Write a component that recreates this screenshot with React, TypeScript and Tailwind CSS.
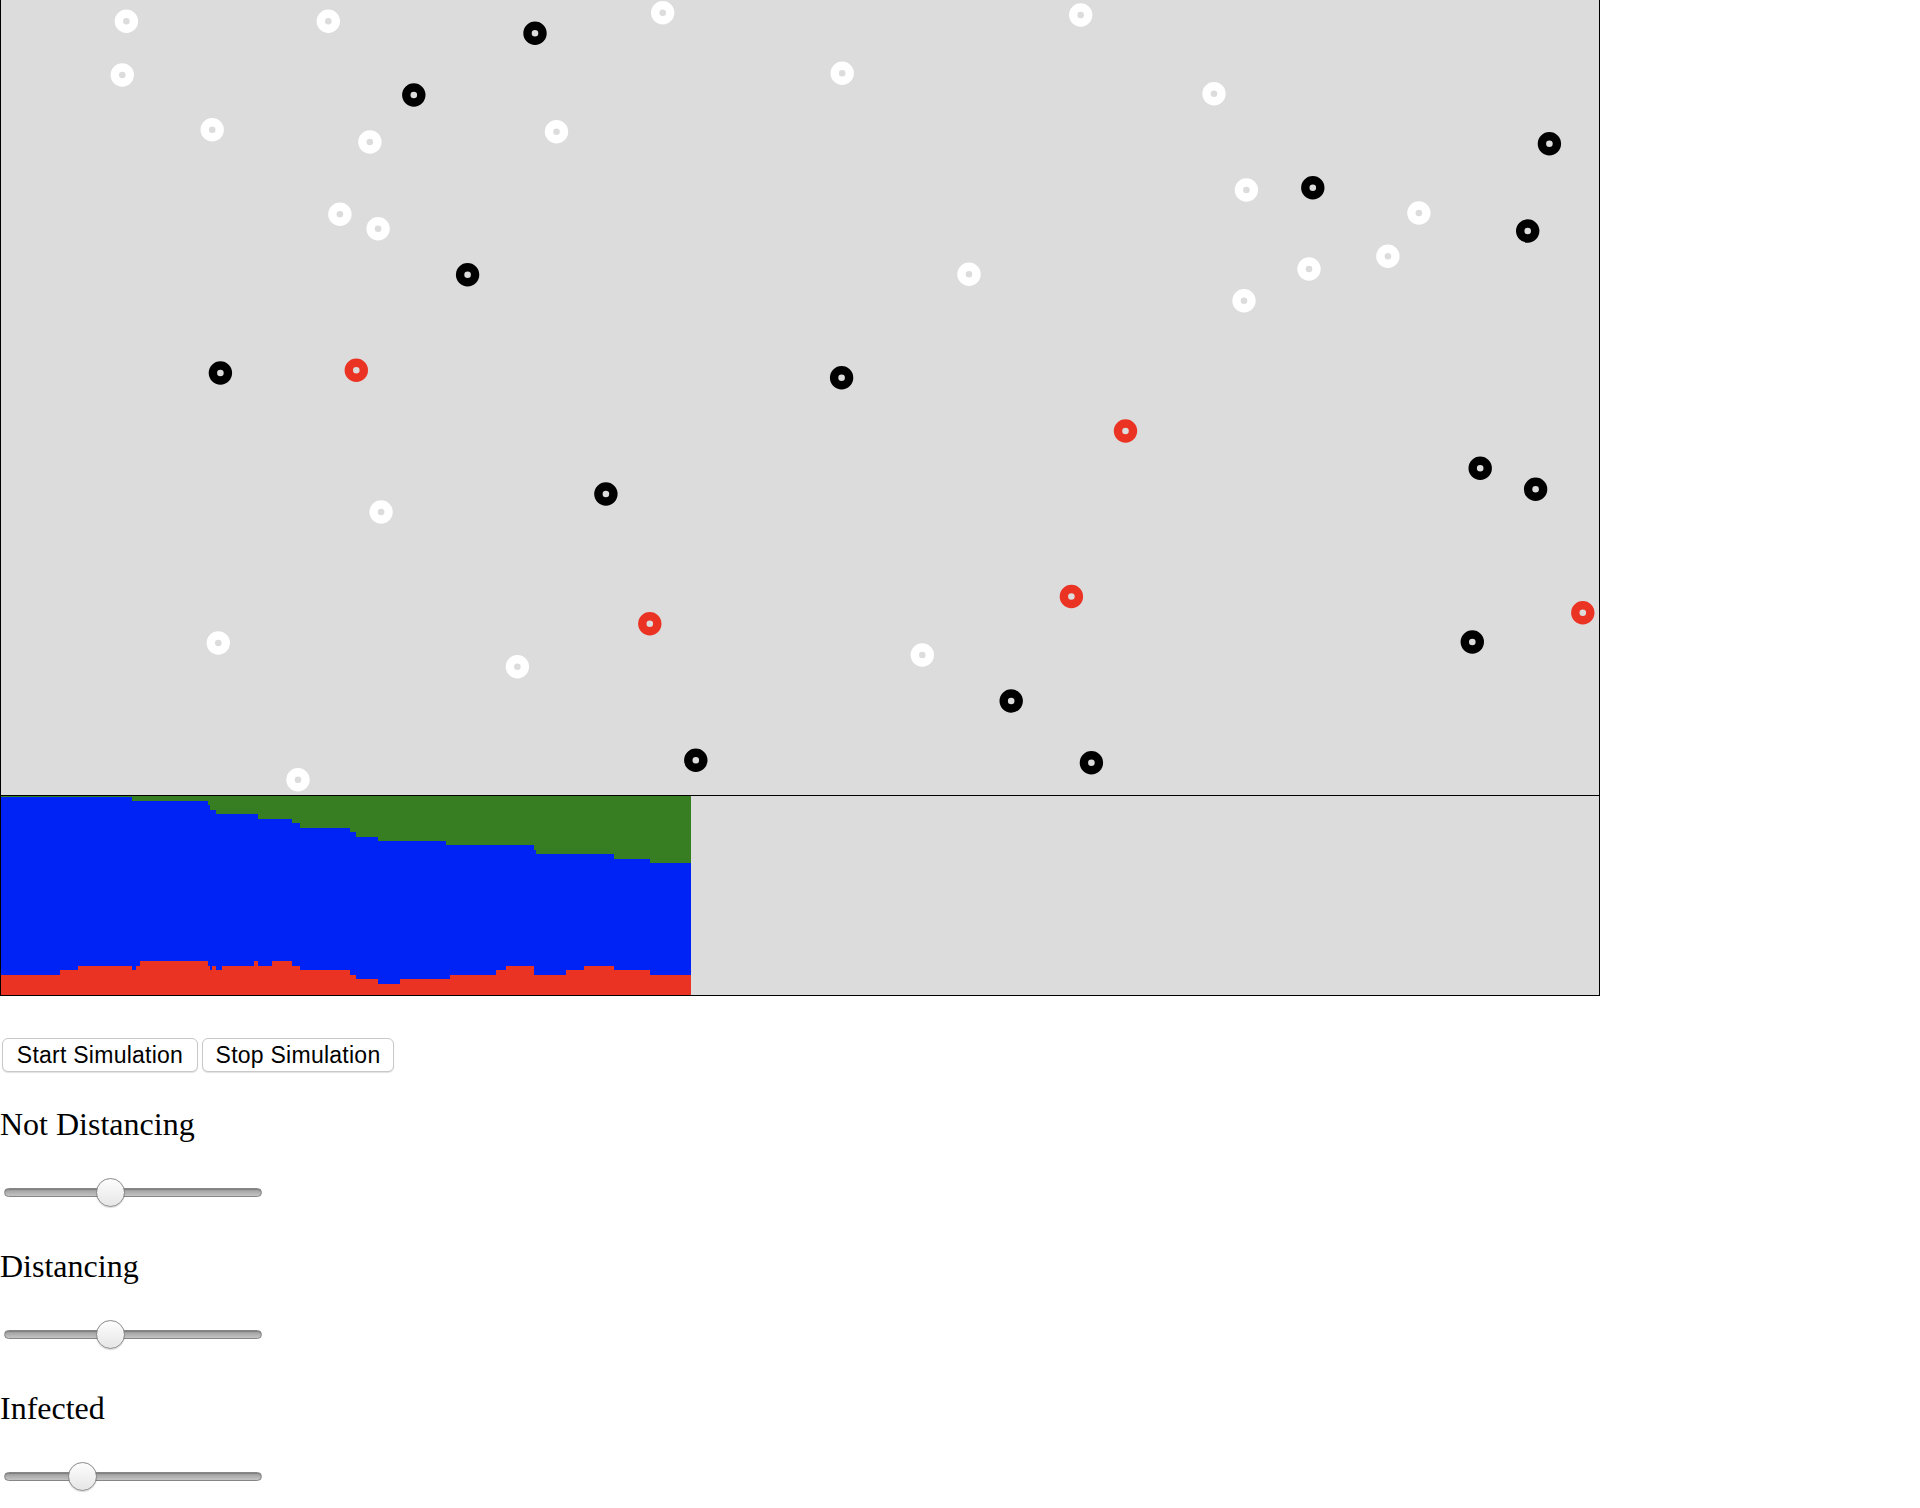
import React from "react";

// people on the board: [x, y] in page pixels
const healthy: [number, number][] = [
  [126.4, 21.3], [328.3, 21.3], [122.3, 75], [212.2, 129.7], [369.9, 142], [339.9, 214.3],
  [378.1, 228.7], [662.7, 12.7], [842.2, 73.3], [556.5, 131.7], [969, 274.3], [1080.7, 15],
  [1214, 93.7], [1246.4, 190], [1418.9, 213], [1387.9, 256.3], [1309, 269], [1244, 300.7],
  [381.1, 512], [218.3, 643], [517.4, 666.7], [298, 779.7], [922.3, 655],
];

const recovered: [number, number][] = [
  [535, 33.3], [413.8, 95], [467.6, 274.7], [220.4, 373], [841.6, 377.7], [1549.4, 143.7],
  [1312.8, 187.7], [1527.7, 231], [605.9, 494], [1011.2, 701], [695.8, 760.3], [1480.2, 468.3],
  [1535.6, 489.3], [1472.3, 642], [1091.4, 762.7],
];

const infected: [number, number][] = [
  [356.3, 370.3], [649.8, 623.7], [1125.5, 431], [1071.4, 596.5], [1582.8, 612.7],
];

// history chart steps: [x start, y of the band edge] in page pixels
const greenEdge: [number, number][] = [
  [0, 797], [131, 801], [207, 805], [209, 810], [215, 814], [257, 819], [291, 823], [299, 828],
  [349, 832], [355, 837], [377, 841], [445, 845], [533, 850], [535, 854], [613, 859], [649, 863],
];

const redEdge: [number, number][] = [
  [0, 975], [59, 970], [77, 966], [131, 970], [135, 966], [139, 961], [207, 966], [209, 970],
  [211, 966], [215, 970], [221, 966], [253, 961], [257, 966], [271, 961], [291, 966], [299, 970],
  [349, 975], [355, 979], [377, 984], [399, 979], [449, 975], [495, 970], [505, 966], [533, 975],
  [565, 970], [583, 966], [613, 970], [649, 975],
];

const CHART_END = 690;
const CHART_TOP = 796;
const CHART_H = 199;

function stepArea(steps: [number, number][]) {
  let d = `M0 ${CHART_H}`;
  steps.forEach(([x, y], i) => {
    const next = i < steps.length - 1 ? steps[i + 1][0] : CHART_END;
    d += ` L${x} ${y - CHART_TOP} L${next} ${y - CHART_TOP}`;
  });
  d += ` L${CHART_END} ${CHART_H} Z`;
  return d;
}

function Dot({ x, y, color }: { x: number; y: number; color: string }) {
  return <circle cx={x - 1} cy={y} r={7.5} fill="none" stroke={color} strokeWidth={8.4} />;
}

function Slider({ value, className }: { value: number; className?: string }) {
  return (
    <div className={`relative ml-[4px] h-[29px] w-[258px] ${className ?? ""}`}>
      <div className="absolute left-0 right-0 top-[10px] h-[9px] rounded-full border border-[#868686] bg-gradient-to-b from-[#9c9c9c] to-[#c4c4c4] shadow-[inset_0_1px_1px_rgba(0,0,0,0.2)]" />
      <div
        className="absolute top-0 h-[29px] w-[29px] rounded-full border-[1.5px] border-[#8a8a8a] bg-gradient-to-b from-[#fdfdfd] to-[#e6e6e6] shadow-[0_1px_1px_rgba(0,0,0,0.15)]"
        style={{ left: `${value * (258 - 29)}px` }}
      />
    </div>
  );
}

export default function App() {
  return (
    <div className="min-h-screen bg-white text-black">
      {/* BOARD */}
      <div className="h-[796px] w-[1600px] border-x border-b border-black bg-[#dcdcdc]">
        <svg width="1598" height="795" className="block">
          {healthy.map(([x, y], i) => (
            <Dot key={`h${i}`} x={x} y={y} color="#ffffff" />
          ))}
          {recovered.map(([x, y], i) => (
            <Dot key={`r${i}`} x={x} y={y} color="#000000" />
          ))}
          {infected.map(([x, y], i) => (
            <Dot key={`i${i}`} x={x} y={y} color="#ea3323" />
          ))}
        </svg>
      </div>

      {/* HISTORY */}
      <div className="h-[200px] w-[1600px] border-x border-b border-black bg-[#dcdcdc]">
        <svg width="1598" height="199" className="block">
          <rect x="0" y="0" width={CHART_END} height={CHART_H} fill="#377e22" />
          <path d={stepArea(greenEdge)} fill="#0023f5" />
          <path d={stepArea(redEdge)} fill="#ea3323" />
        </svg>
      </div>

      {/* CONTROLS */}
      <div className="mt-[42px] ml-[2px] flex gap-[4px] font-['Liberation_Sans',Arial,sans-serif] text-[23px] tracking-[0.25px]">
        <button className="h-[34px] w-[196px] rounded-[6px] border border-[#c8c8c8] bg-white leading-none shadow-[0_1px_1px_rgba(0,0,0,0.12)]">
          Start Simulation
        </button>
        <button className="h-[34px] w-[192px] rounded-[6px] border border-[#c8c8c8] bg-white leading-none shadow-[0_1px_1px_rgba(0,0,0,0.12)]">
          Stop Simulation
        </button>
      </div>

      <div className="font-['Liberation_Serif','Times_New_Roman',serif] text-[32px] leading-[36px]">
        <div className="mt-[34px] h-[36px]">Not Distancing</div>
        <Slider value={0.4} className="mt-[36px]" />
        <div className="mt-[41px] h-[36px]">Distancing</div>
        <Slider value={0.4} className="mt-[36px]" />
        <div className="mt-[41px] h-[36px]">Infected</div>
        <Slider value={0.28} className="mt-[36px]" />
      </div>
    </div>
  );
}
